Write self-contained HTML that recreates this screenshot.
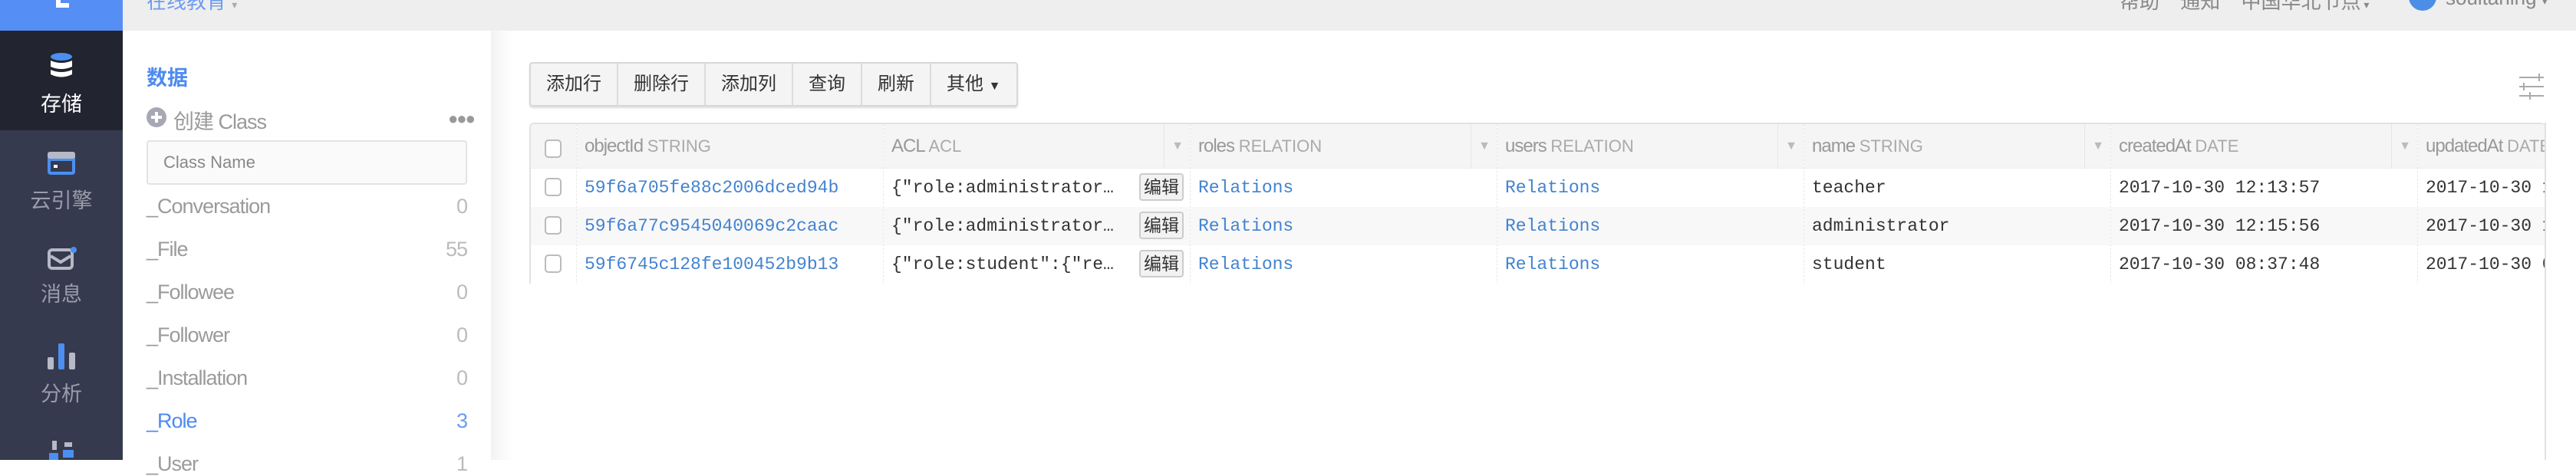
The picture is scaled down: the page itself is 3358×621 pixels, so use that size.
<!DOCTYPE html>
<html><head><meta charset="utf-8"><style>
*{box-sizing:border-box;margin:0;padding:0}
body{width:3358px;height:600px;overflow:hidden;background:#fff;font-family:"Liberation Sans","Noto Sans CJK SC",sans-serif;position:relative}
.abs{position:absolute}
.nav{left:0;top:0;width:160px;height:600px;background:#363a4e}
.logo{left:0;top:0;width:160px;height:40px;background:#558ef4}
.navsel{left:0;top:40px;width:160px;height:130px;background:#22242f}
.nl{width:160px;text-align:center;font-size:27px;color:#9a9cab}
.top{left:160px;top:0;width:3198px;height:40px;background:#eeeeee}
.side{left:160px;top:40px;width:480px;height:560px;background:#fff}
.shadow{left:640px;top:40px;width:30px;height:560px;background:linear-gradient(to right,#f3f3f3,#fff)}
.li{left:191px;width:418px;font-size:27px;color:#9b9b9b;letter-spacing:-1px}
.li span{float:right;color:#bbb}
.tb{left:690px;top:81px;height:58px;border:2px solid #d8d8d8;border-radius:4px;background:#f4f4f4;display:flex;box-shadow:0 2px 2px #ddd}
.tb div{height:54px;line-height:54px;font-size:24px;color:#333;padding:0 20px;border-right:2px solid #dcdcdc}
.tb div:last-child{border-right:none}
.tbl{left:690px;top:160px;width:2628px;height:210px;border:2px solid #e2e2e2;border-bottom:none;border-right:none;border-radius:6px 6px 0 0;overflow:hidden}
.col{position:absolute;top:0;height:210px;border-right:1px dashed #e8e8e8}
.hd{position:absolute;top:0;left:0;right:0;height:58px;background:#f5f5f5;border-bottom:1px solid #eee;font-size:24px;color:#999;line-height:58px;padding-left:10px;white-space:nowrap;letter-spacing:-1px}
.hd b{font-weight:normal;font-size:22px;color:#aaa;letter-spacing:0}
.arr{position:absolute;right:0;top:0;width:34px;height:58px;border-left:1px solid #e6e6e6;color:#bbb;font-size:16px;text-align:center;line-height:58px}
.r{position:absolute;left:0;right:0;height:50px;line-height:50px;font-family:"Liberation Mono",monospace;font-size:23px;color:#333;padding-left:10px;white-space:nowrap;overflow:hidden}
.r.a{color:#4383d0}
.row2{background:#f8f8f8}
.cb{position:absolute;left:18px;width:22px;height:24px;border:2px solid #bbb;border-radius:5px;background:#fff}
.ed{display:inline-block;position:absolute;right:8px;top:6px;height:36px;line-height:32px;padding:0 4px;border:2px solid #ccc;border-radius:4px;background:#f2f2f2;font-family:"Liberation Sans","Noto Sans CJK SC",sans-serif;font-size:23px}
</style></head><body>
<div class="abs nav"></div>
<div class="abs logo"><div class="abs" style="left:73px;top:0;width:6px;height:10px;background:#fff"></div><div class="abs" style="left:73px;top:4px;width:17px;height:6px;background:#fff"></div></div>
<div class="abs navsel"></div>
<!-- storage icon -->
<svg class="abs" style="left:64px;top:69px" width="32" height="34" viewBox="0 0 32 34"><ellipse cx="16" cy="5" rx="14" ry="5" fill="#4b8ff0"/><path d="M2 10 Q16 16 30 10 V18 Q16 24 2 18Z" fill="#fff"/><path d="M2 22 Q16 28 30 22 V28 Q16 35 2 28Z" fill="#fff"/></svg>
<div class="abs nl" style="top:114px;color:#fff">存储</div>
<svg class="abs" style="left:62px;top:198px" width="36" height="30"><rect x="0" y="0" width="36" height="30" rx="4" fill="#4b8ff0"/><rect x="0" y="0" width="36" height="9" rx="3" fill="#b6b9c6"/><rect x="4" y="12" width="28" height="14" fill="#363a4e"/><rect x="8" y="17" width="5" height="4" fill="#fff"/></svg>
<div class="abs nl" style="top:240px">云引擎</div>
<svg class="abs" style="left:62px;top:322px" width="38" height="30"><rect x="2" y="4" width="30" height="24" rx="4" fill="none" stroke="#b6b9c6" stroke-width="4"/><path d="M4 12 L17 20 L30 12" fill="none" stroke="#b6b9c6" stroke-width="4"/><circle cx="34" cy="4" r="4" fill="#4b8ff0"/></svg>
<div class="abs nl" style="top:362px">消息</div>
<svg class="abs" style="left:62px;top:448px" width="36" height="34"><rect x="0" y="18" width="8" height="16" rx="2" fill="#b6b9c6"/><rect x="14" y="0" width="8" height="34" rx="2" fill="#4b8ff0"/><rect x="28" y="12" width="8" height="22" rx="2" fill="#b6b9c6"/></svg>
<div class="abs nl" style="top:492px">分析</div>
<svg class="abs" style="left:62px;top:575px" width="36" height="25"><rect x="6" y="0" width="6" height="12" fill="#b6b9c6"/><rect x="22" y="2" width="10" height="6" fill="#b6b9c6"/><rect x="2" y="16" width="12" height="9" fill="#4b8ff0"/><rect x="20" y="12" width="14" height="10" fill="#4b8ff0"/></svg>

<div class="abs top"></div>
<div class="abs" style="left:191px;top:-18px;font-size:26px;color:#6c9cf0">在线教育 <span style="color:#aaa;font-size:14px">▾</span></div>
<div class="abs" style="left:2763px;top:-18px;font-size:26px;color:#888;white-space:nowrap;word-spacing:20px">帮助 通知 中国华北节点<span style="font-size:14px;word-spacing:0"> ▾</span></div>
<svg class="abs" style="left:3139px;top:-8px" width="38" height="23"><circle cx="19" cy="4" r="18" fill="#4a8ee6"/><path d="M5 -6 L19 8 L33 -6 Z" fill="#fff"/></svg>
<div class="abs" style="left:3188px;top:-18px;font-size:26px;color:#888">soultaning <span style="font-size:14px">▾</span></div>

<div class="abs side"></div>
<div class="abs shadow"></div>
<div class="abs" style="left:191px;top:80px;font-size:27px;font-weight:bold;color:#4d8bf0">数据</div>
<svg class="abs" style="left:191px;top:140px" width="26" height="26"><circle cx="13" cy="13" r="13" fill="#a8a8b4"/><rect x="6" y="11" width="14" height="4" fill="#fff"/><rect x="11" y="6" width="4" height="14" fill="#fff"/></svg>
<div class="abs" style="left:226px;top:137px;font-size:27px;color:#999;letter-spacing:-1px">创建 Class</div>
<div class="abs" style="left:584px;top:142px;font-size:22px;color:#999;letter-spacing:-2px">●●●</div>
<div class="abs" style="left:191px;top:183px;width:418px;height:58px;border:2px solid #e3e3e3;border-radius:4px;background:#fafafa;padding-left:20px;line-height:54px;font-size:22px;color:#888">Class Name</div>
<div class="abs li" style="top:254px">_Conversation<span>0</span></div>
<div class="abs li" style="top:310px">_File<span>55</span></div>
<div class="abs li" style="top:366px">_Followee<span>0</span></div>
<div class="abs li" style="top:422px">_Follower<span>0</span></div>
<div class="abs li" style="top:478px">_Installation<span>0</span></div>
<div class="abs li" style="top:534px;color:#4d8bf0">_Role<span style="color:#6b9cf0">3</span></div>
<div class="abs li" style="top:590px">_User<span>1</span></div>

<div class="abs tb"><div>添加行</div><div>删除行</div><div>添加列</div><div>查询</div><div>刷新</div><div>其他 <span style="font-size:16px">▼</span></div></div>

<svg class="abs" style="left:3280px;top:93px" width="40" height="40" stroke="#aaa" stroke-width="2" fill="none"><path d="M4 8 H36 M30 3 V13 M4 20 H36 M10 15 V25 M4 32 H36 M18 27 V37"/></svg>

<div class="abs tbl">
 <div class="col" style="left:0;width:60px"><div class="hd"></div><div class="cb" style="top:20px"></div>
  <div class="r" style="top:58px"></div><div class="r row2" style="top:108px"></div>
  <div class="cb" style="top:70px"></div><div class="cb" style="top:120px"></div><div class="cb" style="top:170px"></div></div>
 <div class="col" style="left:60px;width:400px"><div class="hd">objectId <b>STRING</b></div>
  <div class="r a" style="top:58px">59f6a705fe88c2006dced94b</div><div class="r a row2" style="top:108px">59f6a77c9545040069c2caac</div><div class="r a" style="top:158px">59f6745c128fe100452b9b13</div></div>
 <div class="col" style="left:460px;width:400px"><div class="hd">ACL <b>ACL</b><div class="arr">▼</div></div>
  <div class="r" style="top:58px">{"role:administrator…<span class="ed">编辑</span></div><div class="r row2" style="top:108px">{"role:administrator…<span class="ed">编辑</span></div><div class="r" style="top:158px">{"role:student":{"re…<span class="ed">编辑</span></div></div>
 <div class="col" style="left:860px;width:400px"><div class="hd">roles <b>RELATION</b><div class="arr">▼</div></div>
  <div class="r a" style="top:58px">Relations</div><div class="r a row2" style="top:108px">Relations</div><div class="r a" style="top:158px">Relations</div></div>
 <div class="col" style="left:1260px;width:400px"><div class="hd">users <b>RELATION</b><div class="arr">▼</div></div>
  <div class="r a" style="top:58px">Relations</div><div class="r a row2" style="top:108px">Relations</div><div class="r a" style="top:158px">Relations</div></div>
 <div class="col" style="left:1660px;width:400px"><div class="hd">name <b>STRING</b><div class="arr">▼</div></div>
  <div class="r" style="top:58px">teacher</div><div class="r row2" style="top:108px">administrator</div><div class="r" style="top:158px">student</div></div>
 <div class="col" style="left:2060px;width:400px"><div class="hd">createdAt <b>DATE</b><div class="arr">▼</div></div>
  <div class="r" style="top:58px">2017-10-30 12:13:57</div><div class="r row2" style="top:108px">2017-10-30 12:15:56</div><div class="r" style="top:158px">2017-10-30 08:37:48</div></div>
 <div class="col" style="left:2460px;width:400px"><div class="hd">updatedAt <b>DATE</b></div>
  <div class="r" style="top:58px">2017-10-30 12:13:57</div><div class="r row2" style="top:108px">2017-10-30 12:15:56</div><div class="r" style="top:158px">2017-10-30 08:37:48</div></div>
</div>
<div class="abs" style="left:3317px;top:160px;width:41px;height:440px;background:#fff;border-left:2px solid #e2e2e2"></div>
</body></html>
